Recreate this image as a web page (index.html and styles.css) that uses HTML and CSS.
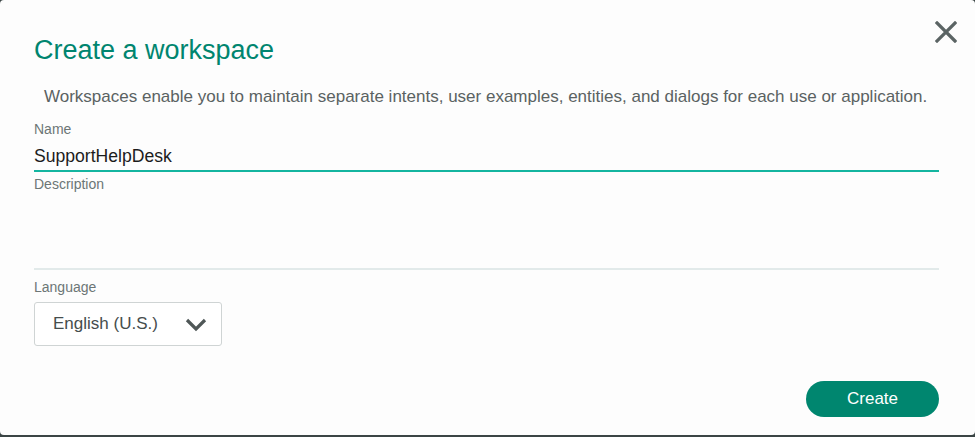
FILE: index.html
```html
<!DOCTYPE html>
<html>
<head>
<meta charset="utf-8">
<link rel="stylesheet" href="styles.css">
</head>
<body>
<div class="backdrop">
  <div class="modal">
    <button class="close" aria-label="Close">
      <svg width="22" height="22" viewBox="0 0 22 22"><path d="M2 2 L20 20 M20 2 L2 20" stroke="#5b6464" stroke-width="3.2" stroke-linecap="square" fill="none"/></svg>
    </button>
    <h1 class="title">Create a workspace</h1>
    <p class="intro">Workspaces enable you to maintain separate intents, user examples, entities, and dialogs for each use or application.</p>
    <div class="field name">
      <label class="label">Name</label>
      <div class="input active">SupportHelpDesk</div>
    </div>
    <div class="field desc">
      <label class="label">Description</label>
      <div class="textarea"></div>
    </div>
    <div class="field lang">
      <label class="label">Language</label>
      <div class="select">
        <span>English (U.S.)</span>
        <svg width="22" height="14" viewBox="0 0 22 14"><path d="M2 2 L11 11 L20 2" stroke="#4f5757" stroke-width="3.2" fill="none"/></svg>
      </div>
    </div>
    <div class="actions">
      <button class="create">Create</button>
    </div>
  </div>
</div>
</body>
</html>
```

FILE: styles.css
```css
* { box-sizing: border-box; }
html, body { margin: 0; padding: 0; }
body {
  font-family: "Liberation Sans", Arial, sans-serif;
  background: #3b4545;
  width: 975px;
  height: 437px;
  overflow: hidden;
}
.backdrop {
  height: 437px;
  padding-bottom: 2px;
}
.modal {
  position: relative;
  height: 435px;
  background: #fdfdfd;
  border-radius: 4px;
  padding: 33px 36px 0 34px;
  display: flex;
  flex-direction: column;
}
.close {
  position: absolute;
  top: 21px;
  right: 18px;
  border: 0;
  background: none;
  padding: 0;
  width: 22px;
  height: 22px;
}
.title {
  margin: 0;
  font-size: 27px;
  font-weight: normal;
  color: #00856f;
  line-height: 34px;
}
.intro {
  margin: 19px 0 0 10px;
  font-size: 17px;
  line-height: 22px;
  color: #5a6262;
}
.field {
  display: flex;
  flex-direction: column;
}
.label {
  font-size: 14px;
  color: #6c7676;
  line-height: 18px;
}
.name .label { margin-top: 12px; }
.input {
  font-size: 17.6px;
  color: #1c1c1c;
  line-height: 24px;
  padding-top: 6px;
  padding-bottom: 2px;
  border-bottom: 2px solid #14b5a0;
}
.desc .label { margin-top: 3px; }
.textarea {
  height: 77px;
  border-bottom: 2px solid #e2eaea;
}
.lang .label { margin-top: 8px; }
.select {
  margin-top: 6px;
  width: 188px;
  height: 44px;
  border: 1px solid #cfd4d4;
  border-radius: 3px;
  display: flex;
  align-items: center;
  justify-content: space-between;
  padding: 0 14px 0 18px;
  font-size: 17px;
  color: #454d4d;
  background: #fff;
}
.select svg { margin-top: 2px; }
.actions {
  display: flex;
  justify-content: flex-end;
  margin-top: 35px;
}
.create {
  width: 133px;
  height: 36px;
  border: 0;
  border-radius: 18px;
  background: #00866f;
  color: #fff;
  font-family: "Liberation Sans", Arial, sans-serif;
  font-size: 17px;
}
```
